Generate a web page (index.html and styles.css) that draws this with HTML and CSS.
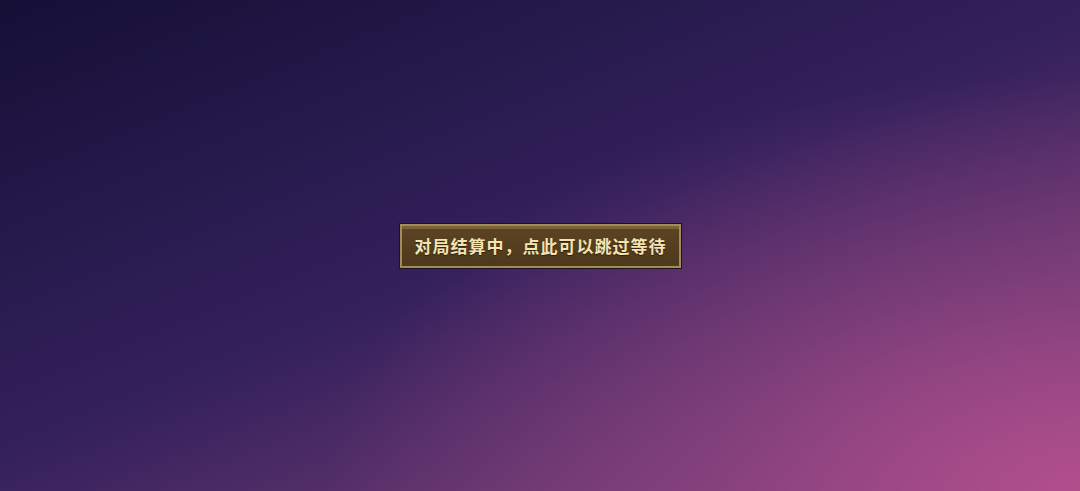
FILE: index.html
```html
<!DOCTYPE html>
<html lang="zh-CN">
<head>
    <meta charset="UTF-8">
    <meta name="viewport" content="width=device-width, initial-scale=1.0">
    <title>对局结算</title>
    <link rel="stylesheet" href="styles.css">
</head>
<body>

<div class="screen">
    <button class="skip-btn">对局结算中，点此可以跳过等待</button>
</div>

</body>
</html>
```

FILE: styles.css
```css
html, body {
    margin: 0;
    padding: 0;
    height: 100%;
}
body {
    font-family: "Noto Sans CJK SC", "Noto Sans", sans-serif;
    background-color: #1e1542;
}
.screen {
    height: 100vh;
    display: flex;
    justify-content: center;
    align-items: center;
    background:
        radial-gradient(ellipse 70% 85% at 100% 100%, rgba(182, 80, 142, 0.9) 0%, rgba(160, 74, 136, 0.45) 50%, rgba(120, 60, 120, 0) 100%),
        linear-gradient(158deg, #150f36 0%, #261a4c 28%, #35215c 50%, #62356e 76%, #84427e 100%);
}
.skip-btn {
    box-sizing: border-box;
    width: 283px;
    height: 46px;
    padding: 0 0 1px;
    border: 1px solid #1c1320;
    box-shadow: inset 0 0 0 2px #a58a5a, inset 0 3px 0 2px #7a6338;
    background: linear-gradient(#5d4523, #4c381c);
    color: #f5e3b2;
    font-family: "Noto Sans CJK SC", sans-serif;
    font-size: 17px;
    font-weight: bold;
    letter-spacing: 1px;
    text-indent: 1px;
    text-shadow: 0 1px 1px rgba(0, 0, 0, 0.5);
    cursor: pointer;
}
```
